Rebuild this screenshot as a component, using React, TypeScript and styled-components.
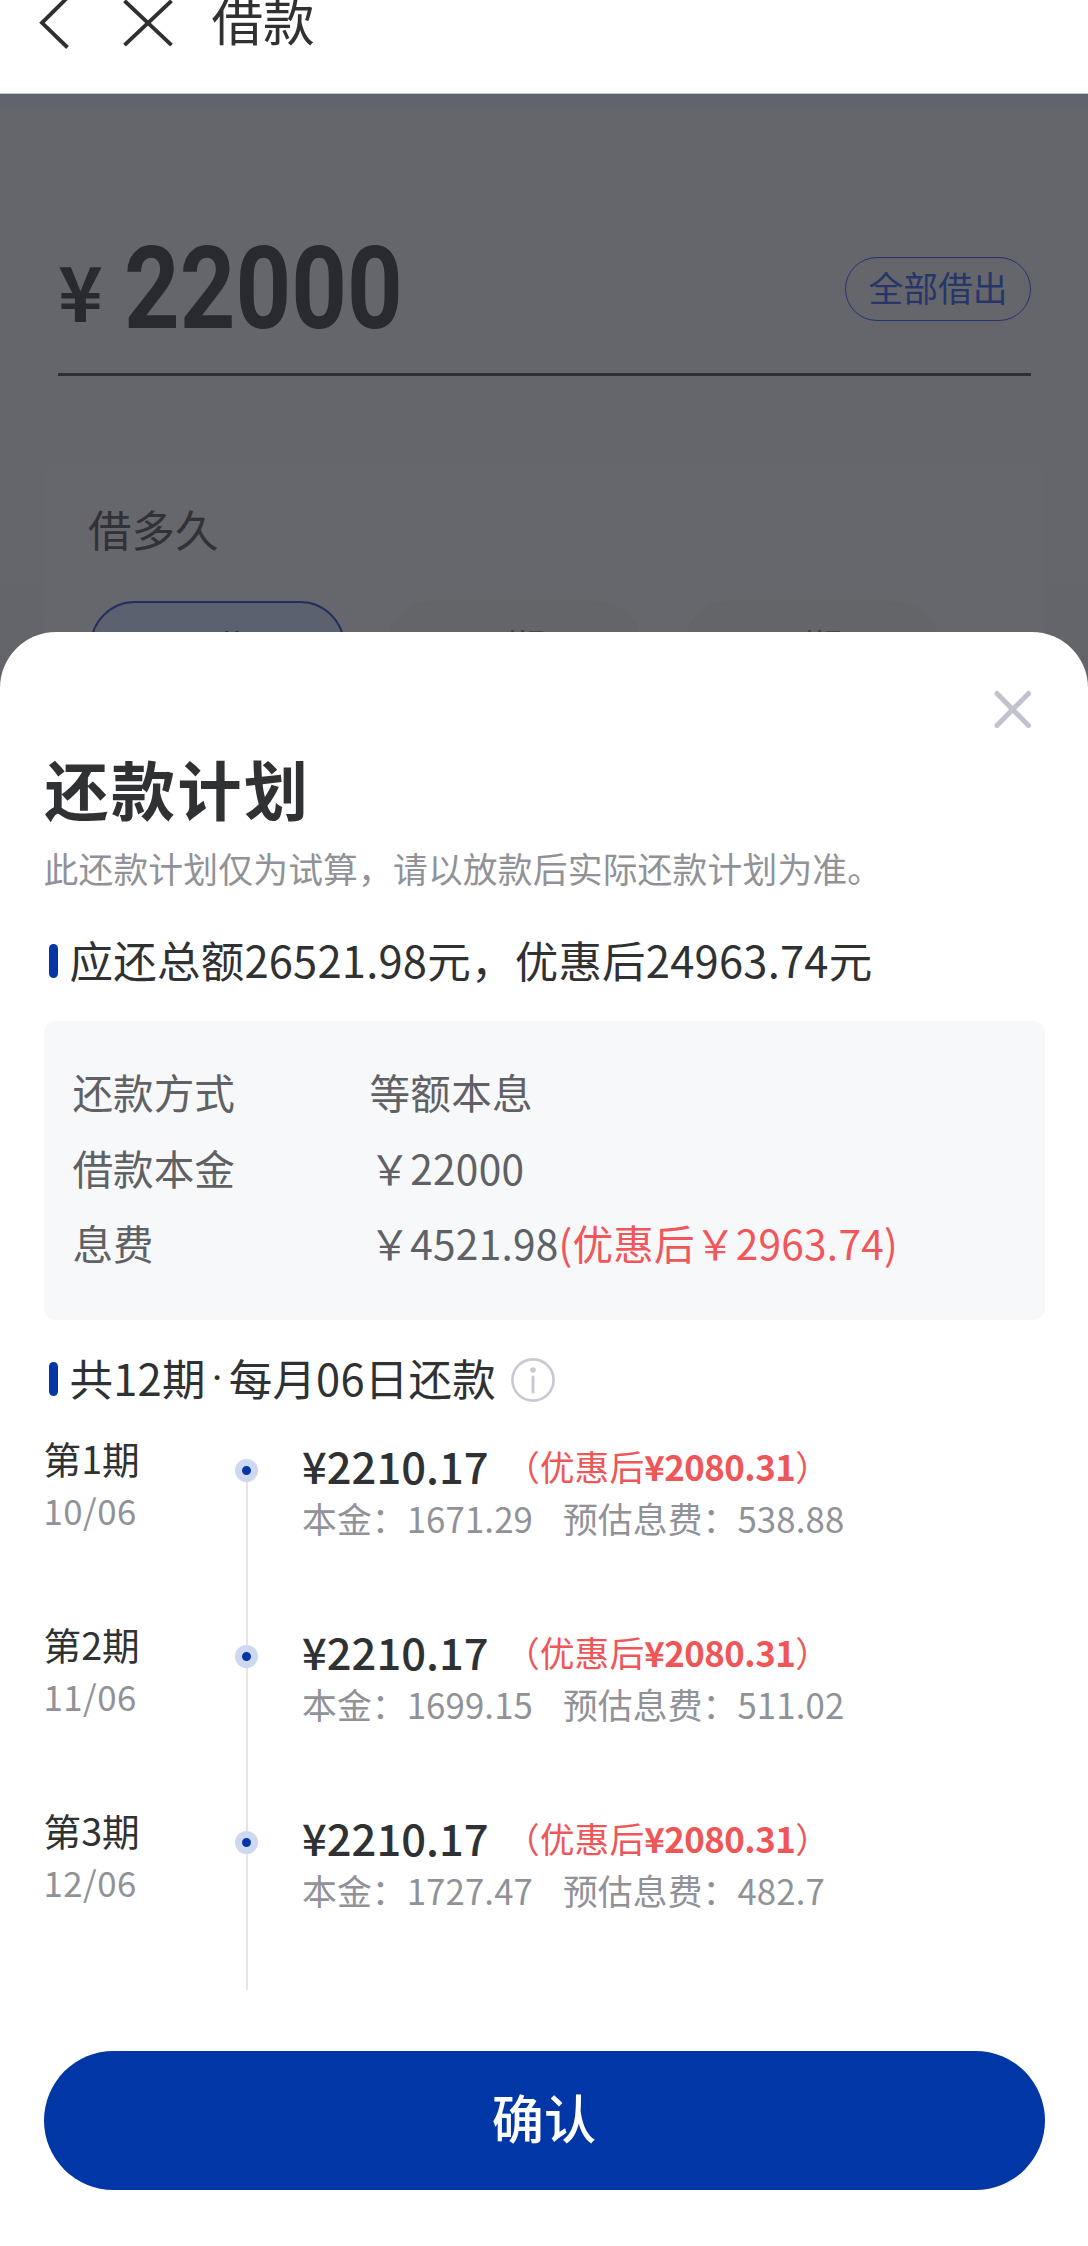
import React from "react";
import styled, { createGlobalStyle } from "styled-components";

const GlobalStyle = createGlobalStyle`
  * { box-sizing: border-box; }
  html, body { margin: 0; padding: 0; background: #fff; }
  body {
    font-family: "Noto Sans CJK SC", "Noto Sans", sans-serif;
    color: #303133;
    -webkit-font-smoothing: antialiased;
  }
  button { font-family: inherit; padding: 0; margin: 0; cursor: pointer; }
`;

const Screen = styled.div`
  position: relative;
  width: 1088px;
  height: 2246px;
  overflow: hidden;
  display: flex;
  flex-direction: column;
  background: #626369;
`;

const Header = styled.header`
  display: flex;
  align-items: flex-start;
  height: 94px;
  flex: none;
  background: #fff;
  border-bottom: 1px solid #c3c3c8;
  svg { display: block; flex: none; }
`;

const HeaderTitle = styled.h1`
  margin: 0 0 0 31.5px;
  font-size: 51.6px;
  font-weight: 400;
  line-height: 37px;
`;

const LoanPage = styled.main`
  display: flex;
  flex-direction: column;
  height: 620px;
  background: linear-gradient(#5f646f 0, #5f646f 11px, #65666b 15px, #65666b 420px, #636469 620px);
`;

const AmountRow = styled.section`
  display: flex;
  align-items: center;
  justify-content: space-between;
  height: 282px;
  margin: 0 57px 0 58px;
  padding-top: 108px;
  border-bottom: 3px solid #2d2e37;
`;

const Amount = styled.div`
  display: flex;
  align-items: center;
  color: #292a2f;
`;

const AmountYen = styled.span`
  width: 66px;
  font-size: 76px;
  font-weight: 700;
  line-height: 90px;
  margin-top: 2px;
`;

const AmountDigits = styled.span`
  font-family: Roboto, sans-serif;
  font-weight: 700;
  font-size: 115px;
  line-height: 120px;
  margin-top: 3px;
  transform: scaleX(0.845);
  transform-origin: 0 50%;
`;

const BorrowAll = styled.button`
  width: 186px;
  height: 64px;
  margin-top: 2px;
  border: 1px solid #26346a;
  border-radius: 32px;
  background: transparent;
  color: #273668;
  font-size: 34.8px;
  line-height: 58px;
  padding-bottom: 6px;
`;

const TermCard = styled.section`
  margin: 87px 44px 0;
  height: 190px;
  padding: 38px 44px 0;
  border-radius: 12px 12px 0 0;
  background: #66676c;
`;

const TermTitle = styled.h2`
  margin: 0;
  font-size: 43.5px;
  font-weight: 400;
  line-height: 56px;
  color: #313237;
`;

const TermList = styled.div`
  display: flex;
  gap: 42px;
  margin: 44px 0 0 2px;
`;

const Term = styled.div<{ $active?: boolean }>`
  width: 255px;
  height: 90px;
  border: 2px solid ${(p) => (p.$active ? "#232e5e" : "#646569")};
  border-radius: 45px;
  background: ${(p) => (p.$active ? "#5c616f" : "#646569")};
  color: ${(p) => (p.$active ? "#232e5e" : "#414247")};
  font-size: 40.6px;
  line-height: ${(p) => (p.$active ? "90px" : "88px")};
  text-align: center;
`;

const Sheet = styled.section`
  position: absolute;
  left: 0;
  right: 0;
  top: 632px;
  bottom: 0;
  padding: 0 43.5px;
  display: flex;
  flex-direction: column;
  border-radius: 56px 56px 0 0;
  background: #fff;
`;

const SheetTop = styled.div`
  display: flex;
  justify-content: flex-end;
  height: 115px;
  padding: 56px 10px 0 0;
`;

const CloseButton = styled.button`
  width: 44px;
  height: 44px;
  border: 0;
  background: none;
  svg { display: block; }
`;

const SheetTitle = styled.h2`
  margin: 0 0 0 1px;
  font-size: 64px;
  font-weight: 700;
  line-height: 80px;
  letter-spacing: 2.5px;
`;

const SheetNote = styled.p`
  margin: 17px 0 43px;
  font-size: 34.8px;
  line-height: 48px;
  color: #919297;
  letter-spacing: 0.15px;
`;

const SectionTitle = styled.h3`
  display: flex;
  align-items: center;
  height: 50px;
  margin: 0;
  padding-left: 5px;
  font-size: 43.5px;
  font-weight: 400;
  line-height: 50px;
  letter-spacing: 0.22px;
  &::before {
    content: "";
    width: 9px;
    height: 34px;
    margin: 2px 12px 0 0;
    border-radius: 4.5px;
    background: #0436a6;
  }
  svg { margin: 4px 0 0 15px; }
`;

const MidDot = styled.span`
  width: 23px;
  padding-top: 4px;
  text-align: center;
  font-family: Roboto, sans-serif;
`;

const Summary = styled.dl`
  display: grid;
  grid-template-columns: 297px 1fr;
  grid-auto-rows: 75.5px;
  height: 299px;
  margin: 36px 0 33px;
  padding: 33px 29px 0;
  border-radius: 12px;
  background: #f7f8fa;
  font-size: 40.6px;
  line-height: 75.5px;
  color: #606164;
`;

const Label = styled.dt`
  margin: 0;
`;

const Value = styled.dd`
  margin: 0;
  white-space: nowrap;
  letter-spacing: 0.25px;
`;

const Saving = styled.span`
  color: #f1565a;
`;

const Timeline = styled.ol`
  list-style: none;
  margin: 29px 0 0;
  padding: 0;
`;

const Installment = styled.li`
  display: grid;
  grid-template-columns: 191px 24px 1fr;
  height: 186px;
`;

const Period = styled.div`
  font-size: 37.7px;
  line-height: 52px;
`;

const DueDate = styled.div`
  font-size: 34.8px;
  line-height: 52px;
  letter-spacing: 0.5px;
  color: #919297;
`;

const Track = styled.div<{ $first?: boolean }>`
  display: flex;
  justify-content: center;
  background: linear-gradient(#e5e5e8, #e5e5e8) 50% ${(p) => (p.$first ? "39px" : "0")} / 2px 100% no-repeat;
`;

const Dot = styled.i`
  width: 23px;
  height: 23px;
  margin-top: 27px;
  border: 7px solid #ced9f1;
  border-radius: 50%;
  background: #0436a6;
`;

const Payment = styled.div`
  padding: 8px 0 0 43.5px;
  white-space: nowrap;
`;

const PaymentLine = styled.div`
  display: flex;
  align-items: center;
  height: 52px;
  line-height: 52px;
`;

const Due = styled.span`
  width: 203px;
  font-size: 43.5px;
  font-weight: 500;
`;

const Discount = styled.span`
  font-size: 34.8px;
  color: #ee5658;
  b { font-weight: 700; letter-spacing: -0.5px; }
`;

const Breakdown = styled.div`
  display: flex;
  gap: 30px;
  font-size: 34.8px;
  line-height: 52px;
  letter-spacing: 0.1px;
  color: #919297;
`;

const Confirm = styled.button`
  flex: none;
  height: 139px;
  margin-top: 61px;
  padding-bottom: 9px;
  border: 0;
  border-radius: 70px;
  background: #0036a5;
  color: #fff;
  font-size: 52.2px;
  font-weight: 500;
`;

const BackIcon = () => (
  <svg width="84" height="50" viewBox="0 0 84 50" fill="none" stroke="#303030" strokeWidth="3.9">
    <path d="M67.5 -2.5 42 22.8 67.5 47.5" />
  </svg>
);

const ExitIcon = () => (
  <svg width="96" height="50" viewBox="84 0 96 50" fill="none" stroke="#303030" strokeWidth="3.9">
    <path d="M124.500 .8 171.500 45.200M171.500 .8 124.500 45.200" />
  </svg>
);

const CloseIcon = () => (
  <svg width="44" height="44" viewBox="0 0 44 44" fill="none" stroke="#c2c2cf" strokeWidth="5" strokeLinecap="round">
    <path d="M6 5.500 37.500 37.500M37.500 5.500 6 37.500" />
  </svg>
);

const InfoIcon = () => (
  <svg width="44" height="44" viewBox="0 0 44 44" fill="none">
    <circle cx="22" cy="22" r="20.600" stroke="#c9c9d5" strokeWidth="2.600" />
    <circle cx="22" cy="12" r="2.800" fill="#c9c9d5" />
    <path d="M22 19V34" stroke="#c9c9d5" strokeWidth="3" strokeLinecap="round" />
  </svg>
);

const installments = [
  { period: "第1期", date: "10/06", principal: "1671.29", interest: "538.88" },
  { period: "第2期", date: "11/06", principal: "1699.15", interest: "511.02" },
  { period: "第3期", date: "12/06", principal: "1727.47", interest: "482.7" },
];

export default function App() {
  return (
    <>
      <GlobalStyle />
      <Screen>
        <Header>
          <BackIcon />
          <ExitIcon />
          <HeaderTitle>借款</HeaderTitle>
        </Header>
        <LoanPage>
          <AmountRow>
            <Amount>
              <AmountYen>¥</AmountYen>
              <AmountDigits>22000</AmountDigits>
            </Amount>
            <BorrowAll>全部借出</BorrowAll>
          </AmountRow>
          <TermCard>
            <TermTitle>借多久</TermTitle>
            <TermList>
              <Term $active>12期</Term>
              <Term>6期</Term>
              <Term>3期</Term>
            </TermList>
          </TermCard>
        </LoanPage>
        <Sheet>
          <SheetTop>
            <CloseButton aria-label="关闭">
              <CloseIcon />
            </CloseButton>
          </SheetTop>
          <SheetTitle>还款计划</SheetTitle>
          <SheetNote>此还款计划仅为试算，请以放款后实际还款计划为准。</SheetNote>
          <SectionTitle>应还总额26521.98元，优惠后24963.74元</SectionTitle>
          <Summary>
            <Label>还款方式</Label>
            <Value>等额本息</Value>
            <Label>借款本金</Label>
            <Value>￥22000</Value>
            <Label>息费</Label>
            <Value>
              ￥4521.98<Saving>(优惠后￥2963.74)</Saving>
            </Value>
          </Summary>
          <SectionTitle>
            共12期<MidDot>·</MidDot>每月06日还款
            <InfoIcon />
          </SectionTitle>
          <Timeline>
            {installments.map((item, i) => (
              <Installment key={item.period}>
                <div>
                  <Period>{item.period}</Period>
                  <DueDate>{item.date}</DueDate>
                </div>
                <Track $first={i === 0}>
                  <Dot />
                </Track>
                <Payment>
                  <PaymentLine>
                    <Due>¥2210.17</Due>
                    <Discount>
                      （优惠后<b>¥2080.31</b>）
                    </Discount>
                  </PaymentLine>
                  <Breakdown>
                    <span>本金：{item.principal}</span>
                    <span>预估息费：{item.interest}</span>
                  </Breakdown>
                </Payment>
              </Installment>
            ))}
          </Timeline>
          <Confirm>确认</Confirm>
        </Sheet>
      </Screen>
    </>
  );
}
